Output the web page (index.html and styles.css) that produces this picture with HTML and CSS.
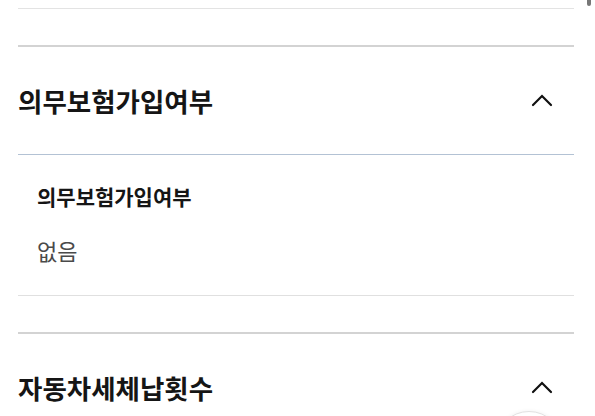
FILE: index.html
```html
<!DOCTYPE html>
<html lang="ko">
<head>
<meta charset="utf-8">
<title>차량 정보</title>
<link rel="stylesheet" href="styles.css">
</head>
<body>
<div class="page">
  <div class="prev-end"></div>

  <section class="acc">
    <div class="acc-head">
      <h2 class="acc-title">의무보험가입여부</h2>
      <svg class="chev" width="22" height="14" viewBox="0 0 22 14" aria-hidden="true">
        <polyline points="2,12 11,3 20,12" fill="none" stroke="#111" stroke-width="2.2" stroke-linecap="round" stroke-linejoin="miter"/>
      </svg>
    </div>
    <div class="acc-body">
      <div class="field-label">의무보험가입여부</div>
      <div class="field-value">없음</div>
    </div>
  </section>

  <section class="acc">
    <div class="acc-head">
      <h2 class="acc-title">자동차세체납횟수</h2>
      <svg class="chev" width="22" height="14" viewBox="0 0 22 14" aria-hidden="true">
        <polyline points="2,12 11,3 20,12" fill="none" stroke="#111" stroke-width="2.2" stroke-linecap="round" stroke-linejoin="miter"/>
      </svg>
    </div>
  </section>
</div>
<div class="fab"></div>
<div class="scroll-thumb"></div>
</body>
</html>
```

FILE: styles.css
```css
html, body {
  margin: 0;
  padding: 0;
  background: #fff;
  overflow: hidden;
}

body {
  font-family: "Noto Sans CJK KR", "Noto Sans", sans-serif;
  color: #111;
  height: 416px;
  position: relative;
}

.page {
  padding: 0 21px 0 18px;
}

.prev-end {
  height: 8px;
  border-bottom: 1px solid #e3e3e3;
}

.acc {
  margin-top: 36px;
  border-top: 2px solid #d3d3d3;
}

.acc-head {
  height: 107px;
  display: flex;
  align-items: center;
  justify-content: space-between;
  padding-right: 21px;
  border-bottom: 1px solid #b3c2d4;
}

.acc-title {
  margin: 0;
  font-size: 26.5px;
  font-weight: 700;
  letter-spacing: 0;
  line-height: 32px;
  color: #151515;
}

.chev {
  display: block;
  margin-top: -2px;
}

.acc-body {
  padding: 27px 0 30px 19px;
  border-bottom: 1px solid #e0e0e0;
}

.field-label {
  font-size: 21px;
  font-weight: 700;
  letter-spacing: 0;
  line-height: 28px;
  color: #151515;
}

.field-value {
  margin-top: 25px;
  font-size: 22px;
  font-weight: 400;
  line-height: 30px;
  color: #4a4a4a;
}

.fab {
  position: absolute;
  left: 495px;
  top: 411px;
  width: 66px;
  height: 66px;
  border-radius: 50%;
  border: 1px solid #e2e2e2;
  background: #fff;
  box-shadow: 0 0 4px rgba(0, 0, 0, 0.06);
}

.scroll-thumb {
  position: absolute;
  left: 587px;
  top: 0;
  width: 4px;
  height: 6px;
  border-radius: 0 0 2px 2px;
  background: #777;
}
```
